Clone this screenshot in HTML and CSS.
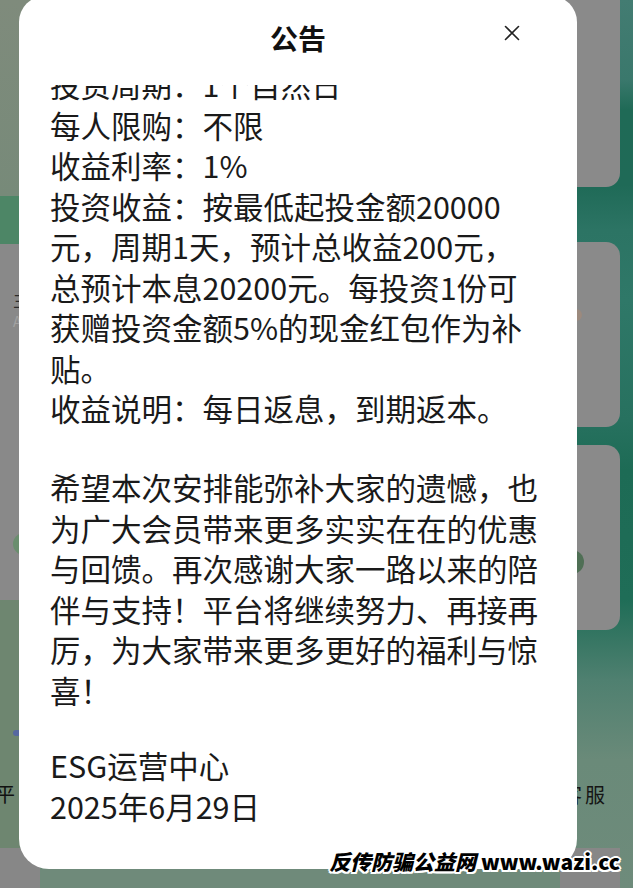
FILE: index.html
```html
<!DOCTYPE html>
<html lang="zh-CN">
<head>
<meta charset="utf-8">
<title>公告</title>
<link rel="stylesheet" href="styles.css">
</head>
<body>
<div class="app">
  <div class="side-left">
    <div class="l-top"></div>
    <div class="l-band"></div>
    <div class="l-card">
      <span class="l-glyph">主</span>
      <span class="l-glyph2">A</span>
      <span class="l-dot"></span>
    </div>
    <div class="l-green">
      <span class="l-icon"></span>
      <span class="l-label">平</span>
    </div>
    <div class="l-bottom"></div>
  </div>
  <div class="middle"></div>
  <div class="side-right">
    <div class="r-card r-card1"></div>
    <div class="r-card r-card2"><span class="r-dot"></span></div>
    <div class="r-card r-card3"><span class="r-circle"></span></div>
    <div class="r-foot"><span class="r-label">客服</span></div>
    <div class="r-bottom"></div>
  </div>
</div>

<div class="modal">
  <div class="modal-head">
    <h2 class="modal-title">公告</h2>
    <svg class="close" viewBox="0 0 16 16" aria-label="关闭"><path d="M1.5 1.5 L14.5 14.5 M14.5 1.5 L1.5 14.5" stroke="#222" stroke-width="1.6" fill="none" stroke-linecap="round"/></svg>
  </div>
  <div class="modal-body">
    <div class="scroller">
      <p class="para">投资周期：1个自然日<br>每人限购：不限<br>收益利率：1%<br>投资收益：按最低起投金额20000<br>元，周期1天，预计总收益200元，<br>总预计本息20200元。每投资1份可<br>获赠投资金额5%的现金红包作为补<br>贴。<br>收益说明：每日返息，到期返本。</p>
      <p class="para">希望本次安排能弥补大家的遗憾，也<br>为广大会员带来更多实实在在的优惠<br>与回馈。再次感谢大家一路以来的陪<br>伴与支持！平台将继续努力、再接再<br>厉，为大家带来更多更好的福利与惊<br>喜！</p>
      <p class="para sign">ESG运营中心<br>2025年6月29日</p>
    </div>
  </div>
</div>

<div class="watermark"><span class="wm-cn">反传防骗公益网</span> www.wazi.cc</div>
</body>
</html>
```
FILE: styles.css
```css
* { box-sizing: border-box; }
html, body { margin: 0; padding: 0; }
body {
  width: 633px;
  height: 888px;
  overflow: hidden;
  position: relative;
  font-family: "Noto Sans CJK SC", "Noto Sans", sans-serif;
  background: #6f8a7a;
}

/* dimmed page behind the dialog */
.app { display: flex; height: 888px; }
.side-left { width: 40px; display: flex; flex-direction: column; }
.l-top { height: 196px; background: linear-gradient(180deg, #7f8b7c, #778a79); }
.l-band { height: 48px; background: #4d8666; }
.l-card {
  height: 356px;
  background: #898989;
  display: flex;
  flex-direction: column;
  align-items: flex-start;
  padding-left: 13px;
}
.l-glyph { margin-top: 46px; font-size: 18px; line-height: 18px; color: #2a2a2a; }
.l-glyph2 { margin-top: 6px; font-size: 14px; line-height: 14px; color: #a2a2a2; }
.l-dot { margin-top: auto; margin-bottom: 45px; width: 22px; height: 22px; border-radius: 50%; background: #6a8e6e; }
.l-green {
  height: 248px;
  background: #6e8670;
  display: flex;
  flex-direction: column;
  align-items: flex-start;
}
.l-icon { margin: 130px 0 0 13px; width: 14px; height: 6px; border-radius: 3px; background: #5668a0; }
.l-label { margin: 48px 0 0 -5px; font-size: 20px; line-height: 20px; color: #111; }
.l-bottom { flex: 1; background: #878787; }

.middle { flex: 1; }

.side-right {
  width: 73px;
  display: flex;
  flex-direction: column;
  background: linear-gradient(180deg, #437c72 0, #3a786c 80px, #1f6a56 110px, #1f6a57 185px, #2c7464 230px, #2f7868 300px, #27715f 420px, #1d6b55 470px, #1f6d57 600px, #4f8070 680px, #6a8a79 760px, #6e8b7b 888px);
}
.r-card { width: 60px; background: #8a8a8a; border-radius: 14px; flex: none; }
.r-card1 { height: 187px; border-radius: 0 0 14px 14px; }
.r-card2 { margin-top: 55px; height: 185px; padding: 67px 0 0 10px; }
.r-dot { display: block; width: 12px; height: 12px; border-radius: 50%; background: #9c8a7e; }
.r-card3 { margin-top: 18px; height: 185px; padding-top: 105px; }
.r-circle { display: block; width: 24px; height: 24px; border-radius: 50%; background: #4f6f55; }
.r-foot { flex: 1; padding: 155px 0 0 2px; }
.r-label { display: block; font-size: 20px; line-height: 20px; color: #151515; letter-spacing: 3px; }
.r-bottom { height: 40px; flex: none; background: linear-gradient(90deg, #878787 0 60px, transparent 60px); }

/* dialog */
.modal {
  position: absolute;
  left: 19px;
  top: -4px;
  width: 558px;
  height: 873px;
  background: #fff;
  border-radius: 26px 26px 30px 30px;
  overflow: hidden;
  display: flex;
  flex-direction: column;
}
.modal-head {
  height: 89px;
  flex: none;
  position: relative;
  display: flex;
  justify-content: center;
  padding-top: 22px;
}
.modal-title { margin: 0; font-size: 28px; font-weight: 700; line-height: 40px; color: #111; }
.close { position: absolute; top: 29px; right: 57px; width: 16px; height: 16px; }
.modal-body { flex: 1; overflow: hidden; padding: 0 31px; }
.scroller { margin-top: -21px; }
.para { margin: 0; font-size: 30.5px; line-height: 40.5px; color: #1a1a1a; white-space: nowrap; }
.para + .para { margin-top: 38.5px; }
.para.sign { margin-top: 35px; }

/* watermark */
.watermark {
  position: absolute;
  right: 13px;
  top: 848px;
  font-size: 21px;
  font-weight: 900;
  line-height: 26px;
  color: #000;
  white-space: nowrap;
  text-shadow: 2px 0 0 #fff, -2px 0 0 #fff, 0 2px 0 #fff, 0 -2px 0 #fff,
    1.5px 1.5px 0 #fff, -1.5px -1.5px 0 #fff, 1.5px -1.5px 0 #fff, -1.5px 1.5px 0 #fff;
}
.wm-cn { font-style: italic; }
```
